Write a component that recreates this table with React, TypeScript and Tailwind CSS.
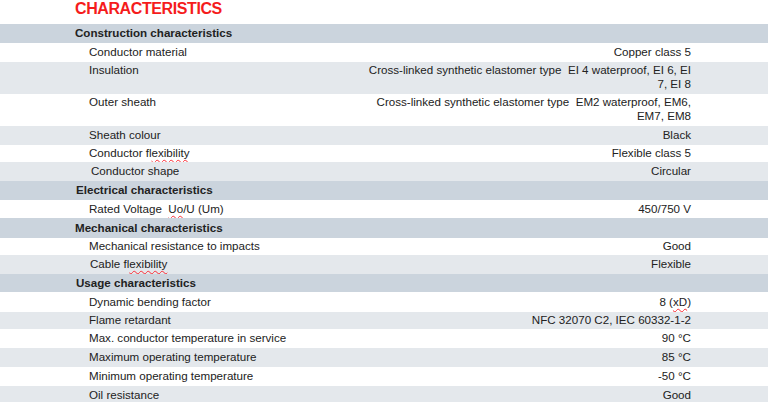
import React from "react";

type Row =
  | { kind: "head"; label: string; h: string; pl?: string }
  | {
      kind: "item";
      label: React.ReactNode;
      value: React.ReactNode;
      h: string;
      shade: boolean;
      pl?: string;
      multi?: boolean;
    };

const Squiggle = ({ children }: { children: React.ReactNode }) => (
  <span className="underline decoration-wavy decoration-red-500 decoration-[1px] underline-offset-[2px]">
    {children}
  </span>
);

const rows: Row[] = [
  { kind: "head", label: "Construction characteristics", h: "h-[19px]" },
  { kind: "item", label: "Conductor material", value: "Copper class 5", h: "h-[19px]", shade: false },
  {
    kind: "item",
    label: "Insulation",
    value: (
      <>
        Cross-linked synthetic elastomer type&nbsp; EI 4 waterproof, EI 6, EI
        <br />
        7, EI 8
      </>
    ),
    h: "h-[32px]",
    shade: true,
    multi: true,
  },
  {
    kind: "item",
    label: "Outer sheath",
    value: (
      <>
        Cross-linked synthetic elastomer type&nbsp; EM2 waterproof, EM6,
        <br />
        EM7, EM8
      </>
    ),
    h: "h-[32px]",
    shade: false,
    multi: true,
  },
  { kind: "item", label: "Sheath colour", value: "Black", h: "h-[19px]", shade: true },
  {
    kind: "item",
    label: (
      <>
        Conductor fl<Squiggle>exibility</Squiggle>
      </>
    ),
    value: "Flexible class 5",
    h: "h-[17px]",
    shade: false,
  },
  { kind: "item", label: "Conductor shape", value: "Circular", h: "h-[19px]", shade: true, pl: "pl-[91px]" },
  { kind: "head", label: "Electrical characteristics", h: "h-[19px]", pl: "pl-[76px]" },
  {
    kind: "item",
    label: (
      <>
        Rated Voltage&nbsp; <Squiggle>Uo</Squiggle>/U (Um)
      </>
    ),
    value: "450/750 V",
    h: "h-[18px]",
    shade: false,
  },
  { kind: "head", label: "Mechanical characteristics", h: "h-[20px]" },
  { kind: "item", label: "Mechanical resistance to impacts", value: "Good", h: "h-[17px]", shade: false },
  {
    kind: "item",
    label: (
      <>
        Cable fl<Squiggle>exibility</Squiggle>
      </>
    ),
    value: "Flexible",
    h: "h-[19px]",
    shade: true,
    pl: "pl-[90px]",
  },
  { kind: "head", label: "Usage characteristics", h: "h-[18px]", pl: "pl-[76px]" },
  {
    kind: "item",
    label: "Dynamic bending factor",
    value: (
      <>
        8 (<Squiggle>xD</Squiggle>)
      </>
    ),
    h: "h-[20px]",
    shade: false,
  },
  { kind: "item", label: "Flame retardant", value: "NFC 32070 C2, IEC 60332-1-2", h: "h-[17px]", shade: true },
  { kind: "item", label: "Max. conductor temperature in service", value: "90 °C", h: "h-[19px]", shade: false },
  { kind: "item", label: "Maximum operating temperature", value: "85 °C", h: "h-[19px]", shade: true },
  { kind: "item", label: "Minimum operating temperature", value: "-50 °C", h: "h-[19px]", shade: false },
  { kind: "item", label: "Oil resistance", value: "Good", h: "h-[19px]", shade: true },
];

export default function App() {
  return (
    <div className="w-[768px] h-[402px] overflow-hidden bg-white text-[#222] font-['Liberation_Sans',Arial,sans-serif]">
      <div className="h-[24px] pl-[75px] text-[16px] leading-[18px] font-bold tracking-[-0.4px] text-[#f51c1c]">
        CHARACTERISTICS
      </div>

      <div className="flex flex-col text-[11.6px] leading-[14.5px]">
        {rows.map((r, i) =>
          r.kind === "head" ? (
            <div
              key={i}
              className={`flex items-center bg-[#cbd4dd] font-bold ${r.h} ${r.pl ?? "pl-[75px]"}`}
            >
              {r.label}
            </div>
          ) : (
            <div
              key={i}
              className={`flex justify-between pr-[77px] ${r.multi ? "items-start pt-[0.5px]" : "items-center"} ${r.h} ${
                r.pl ?? "pl-[89px]"
              } ${r.shade ? "bg-[#e4e8ec]" : "bg-white"}`}
            >
              <span className="whitespace-nowrap">{r.label}</span>
              <span className="whitespace-nowrap text-right">{r.value}</span>
            </div>
          )
        )}
      </div>
    </div>
  );
}
